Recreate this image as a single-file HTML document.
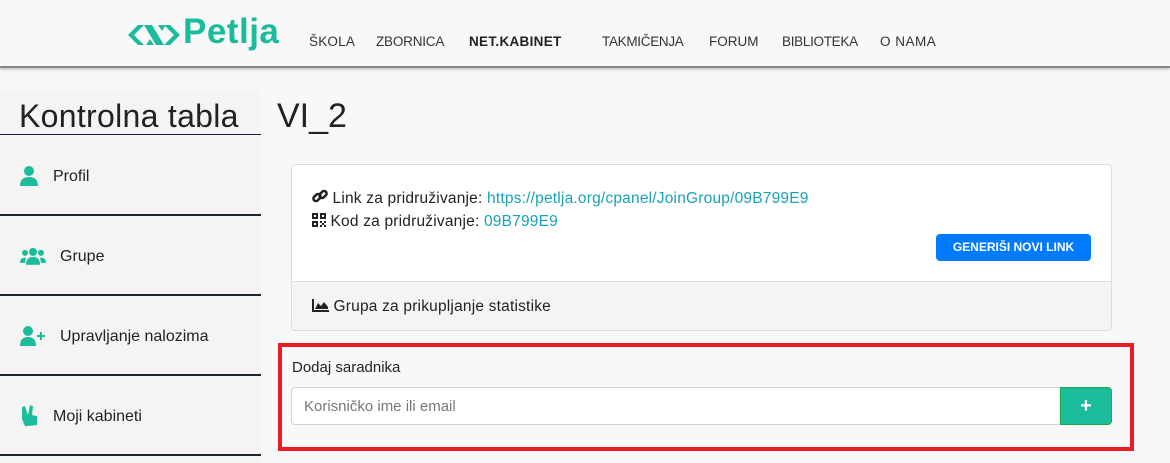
<!DOCTYPE html>
<html><head><meta charset="utf-8"><style>
*{box-sizing:border-box;margin:0;padding:0}
body{width:1170px;height:463px;overflow:hidden;background:#f8f8f8;font-family:"Liberation Sans",sans-serif;color:#212529;position:relative}
.hdr{position:absolute;left:0;top:0;width:1170px;height:68px;background:#f8f8f8;border-bottom:2px solid #888;box-shadow:0 1px 3px rgba(0,0,0,.3)}
.nav{position:absolute;top:34px;font-size:13.5px;color:#333;line-height:16px}
.side{position:absolute;left:0;top:90px;width:261px;height:373px;background:#f4f4f4}
.item{position:absolute;left:0;width:261px;border-bottom:2px solid #1c2233;font-size:16px;color:#222}
.item span{position:absolute;top:50%;transform:translateY(-38%)}
.ic{position:absolute;top:50%;transform:translateY(-45%);left:20px}
.card{position:absolute;left:291px;top:164px;width:821px;height:167px;background:#fff;border:1px solid #ddd;border-radius:4px;overflow:hidden}
.foot{position:absolute;left:0;top:116px;width:100%;height:51px;background:#f4f4f4;border-top:1px solid #ddd}
a{color:#17a2b8;text-decoration:none}
</style></head><body>
<div class="hdr">
<svg style="position:absolute;left:128px;top:20px" width="52" height="30" viewBox="0 0 52 30"><g fill="#1abc9c"><path d="M0 15 L10 5 L16 5 L6 15 L16 25 L10 25Z"/><path d="M52 15 L42 5 L36 5 L46 15 L36 25 L42 25Z"/><path d="M16 5 L24 5 L36 25 L28 25Z"/><path d="M18 25 L22 19 L26 25Z M30 5 L34 11 L38 5Z"/></g></svg>
<div style="position:absolute;left:183px;top:12px;font-size:35px;font-weight:bold;color:#1abc9c;letter-spacing:0.5px">Petlja</div>
<div class="nav" style="left:309px;letter-spacing:0.2px">ŠKOLA</div>
<div class="nav" style="left:376px;letter-spacing:-0.2px">ZBORNICA</div>
<div class="nav" style="left:469px;font-weight:bold;color:#222;letter-spacing:0.3px">NET.KABINET</div>
<div class="nav" style="left:602px;letter-spacing:-0.3px">TAKMIČENJA</div>
<div class="nav" style="left:709px">FORUM</div>
<div class="nav" style="left:782px;letter-spacing:-0.3px">BIBLIOTEKA</div>
<div class="nav" style="left:880px;letter-spacing:0.5px">O NAMA</div>
</div>
<div class="side">
<div style="position:absolute;left:0;top:0;width:261px;height:45px;border-bottom:1px solid #1c2233;font-size:32px;color:#222;padding-left:19px;line-height:52px;letter-spacing:0.3px">Kontrolna tabla</div>
<div class="item" style="top:46px;height:80px"><svg class="ic" width="18" height="20" viewBox="0 0 18 20"><circle cx="9" cy="5" r="5" fill="#1abc9c"/><path d="M0 20 Q0 11 9 11 Q18 11 18 20Z" fill="#1abc9c"/></svg><span style="left:53px">Profil</span></div>
<div class="item" style="top:126px;height:80px"><svg class="ic" width="26" height="18" viewBox="0 0 26 18"><g fill="#1abc9c"><circle cx="13" cy="5" r="4"/><circle cx="5" cy="6" r="3"/><circle cx="21" cy="6" r="3"/><path d="M6 18 Q6 10 13 10 Q20 10 20 18Z"/><path d="M0 16 Q0 10 6 11 L5 16Z M26 16 Q26 10 20 11 L21 16Z"/></g></svg><span style="left:60px">Grupe</span></div>
<div class="item" style="top:206px;height:80px"><svg class="ic" width="26" height="20" viewBox="0 0 26 20"><g fill="#1abc9c"><circle cx="8" cy="5" r="5"/><path d="M0 20 Q0 11 8 11 Q16 11 16 20Z"/><path d="M20 6h2v3h3v2h-3v3h-2v-3h-3v-2h3z"/></g></svg><span style="left:60px">Upravljanje nalozima</span></div>
<div class="item" style="top:286px;height:80px"><svg class="ic" width="18" height="22" viewBox="0 0 18 22"><path d="M2 2 L5 1 L8 10 L10 0 L13 1 L12 10 L17 11 L17 20 L5 21 L2 14Z" fill="#1abc9c"/></svg><span style="left:53px">Moji kabineti</span></div>
</div>
<div style="position:absolute;left:277px;top:97px;font-size:34px;color:#222">VI_2</div>
<div class="card">
<div style="position:absolute;left:20px;top:24px;font-size:15.5px;color:#222;letter-spacing:0.2px"><svg width="16" height="15" viewBox="0 0 16 15" style="vertical-align:-1px"><g fill="none" stroke="#222" stroke-width="2.5"><rect x="1" y="6" width="8" height="5" rx="2.5" transform="rotate(-45 5 8.5)"/><rect x="7" y="3" width="8" height="5" rx="2.5" transform="rotate(-45 11 5.5)"/></g></svg> Link za pridruživanje: <a>https://petlja.org/cpanel/JoinGroup/09B799E9</a></div>
<div style="position:absolute;left:20px;top:48px;font-size:15.5px;color:#222;letter-spacing:0.2px"><svg width="14" height="14" viewBox="0 0 14 14" style="vertical-align:-1px"><g fill="#222"><path d="M0 0h6v6H0zM2 2v2h2V2zM8 0h6v6H8zM10 2v2h2V2zM0 8h6v6H0zM2 10v2h2v-2zM8 8h2v2H8zM12 8h2v2h-2zM10 10h2v2h-2zM8 12h2v2H8zM12 12h2v2h-2z" fill-rule="evenodd"/></g></svg> Kod za pridruživanje: <a>09B799E9</a></div>
<div style="position:absolute;left:644px;top:69px;width:155px;height:27px;background:#007bff;border-radius:4px;color:#fff;font-size:12px;font-weight:bold;text-align:center;line-height:27px">GENERIŠI NOVI LINK</div>
<div class="foot"><div style="position:absolute;left:20px;top:16px;font-size:15.5px;color:#222;letter-spacing:0.2px"><svg width="17" height="13" viewBox="0 0 17 13" style="vertical-align:-1px"><path d="M0 0h2v11h15v2H0z M3 10 L6 4 L9 7 L12 3 L16 8 L16 10Z" fill="#222"/></svg> Grupa za prikupljanje statistike</div></div>
</div>
<div style="position:absolute;left:278px;top:343px;width:856px;height:108px;border:4px solid #ed1c24"></div>
<div style="position:absolute;left:292px;top:359px;font-size:15px;color:#222">Dodaj saradnika</div>
<div style="position:absolute;left:291px;top:387px;width:770px;height:38px;background:#fff;border:1px solid #ced4da;border-radius:4px 0 0 4px;font-size:15px;color:#777;padding-left:12px;line-height:38px">Korisničko ime ili email</div>
<div style="position:absolute;left:1060px;top:387px;width:52px;height:38px;background:#1abc9c;border:1px solid #28a745;border-radius:0 4px 4px 0;color:#fff;font-size:20px;font-weight:bold;text-align:center;line-height:36px">+</div>
</body></html>
